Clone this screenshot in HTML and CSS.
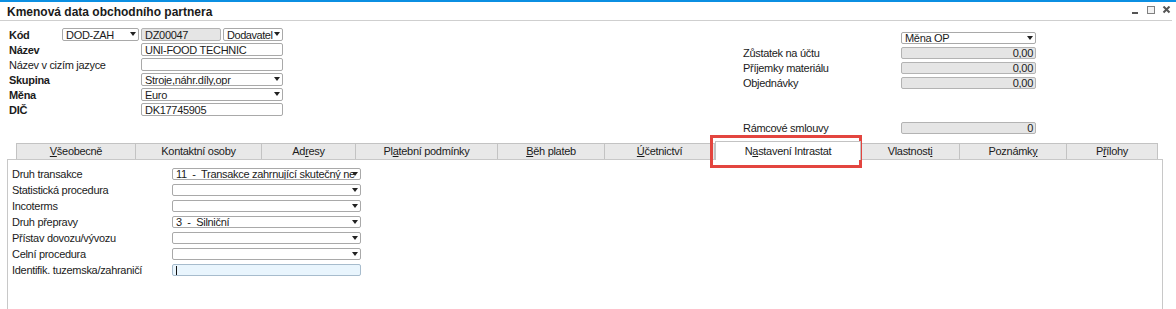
FILE: index.html
```html
<!DOCTYPE html>
<html lang="cs">
<head>
    <meta charset="UTF-8">
    <title>Kmenová data obchodního partnera</title>
    <link rel="stylesheet" href="styles.css">
</head>
<body>

<div class="topbar"></div>

<div class="titlebar">
    <h1>Kmenová data obchodního partnera</h1>
    <svg class="win-btns" width="41" height="8" viewBox="0 0 41 8">
        <rect x="2" y="6" width="6" height="2" fill="#555"/>
        <rect x="17.5" y="0.5" width="7" height="7" fill="#f2f2f2" stroke="#808080"/>
        <path d="M33.5 0.5 L39.5 6.5 M39.5 0.5 L33.5 6.5" stroke="#555" stroke-width="2"/>
    </svg>
</div>

<div class="head">
    <div class="head-left">
        <div class="row">
            <span class="lbl kod bold">Kód</span>
            <div class="field combo w77">DOD-ZAH</div>
            <div class="field ro w80">DZ00047</div>
            <div class="field combo w60">Dodavatel</div>
        </div>
        <div class="row">
            <span class="lbl bold">Název</span>
            <div class="field w142">UNI-FOOD TECHNIC</div>
        </div>
        <div class="row">
            <span class="lbl">Název v cizím jazyce</span>
            <div class="field w142"></div>
        </div>
        <div class="row">
            <span class="lbl bold">Skupina</span>
            <div class="field combo w142">Stroje,náhr.díly,opr</div>
        </div>
        <div class="row">
            <span class="lbl bold">Měna</span>
            <div class="field combo w142">Euro</div>
        </div>
        <div class="row">
            <span class="lbl bold">DIČ</span>
            <div class="field w142">DK17745905</div>
        </div>
    </div>

    <div class="head-right">
        <div class="row">
            <span class="lbl"></span>
            <div class="field combo w135">Měna OP</div>
        </div>
        <div class="row">
            <span class="lbl">Zůstatek na účtu</span>
            <div class="field ro num w135">0,00</div>
        </div>
        <div class="row">
            <span class="lbl">Příjemky materiálu</span>
            <div class="field ro num w135">0,00</div>
        </div>
        <div class="row">
            <span class="lbl">Objednávky</span>
            <div class="field ro num w135">0,00</div>
        </div>
        <div class="row"></div>
        <div class="row"></div>
        <div class="row">
            <span class="lbl">Rámcové smlouvy</span>
            <div class="field ro num w135">0</div>
        </div>
    </div>
</div>

<div class="tabs">
    <div class="tab first" style="width: 120px"><u>V</u>šeobecně</div>
    <div class="tab" style="width: 126px">Kontaktní osoby</div>
    <div class="tab" style="width: 94px">Ad<u>r</u>esy</div>
    <div class="tab" style="width: 142px">Pl<u>a</u>tební podmínky</div>
    <div class="tab" style="width: 107px"><u>B</u>ěh plateb</div>
    <div class="tab" style="width: 110px"><u>Ú</u>četnictví</div>
    <div class="tab active" style="width: 146px">N<u>a</u>stavení Intrastat</div>
    <div class="tab" style="width: 99px">Vlastnost<u>i</u></div>
    <div class="tab" style="width: 107px">Poznámk<u>y</u></div>
    <div class="tab" style="width: 91px">P<u>ř</u>ílohy</div>
</div>

<div class="panel">
    <div class="row">
        <span class="lbl">Druh transakce</span>
        <div class="field combo w189">11  -  Transakce zahrnující skutečný ne</div>
    </div>
    <div class="row">
        <span class="lbl">Statistická procedura</span>
        <div class="field combo w189"></div>
    </div>
    <div class="row">
        <span class="lbl">Incoterms</span>
        <div class="field combo w189"></div>
    </div>
    <div class="row">
        <span class="lbl">Druh přepravy</span>
        <div class="field combo w189">3  -  Silniční</div>
    </div>
    <div class="row">
        <span class="lbl">Přístav dovozu/vývozu</span>
        <div class="field combo w189"></div>
    </div>
    <div class="row">
        <span class="lbl">Celní procedura</span>
        <div class="field combo w189"></div>
    </div>
    <div class="row">
        <span class="lbl">Identifik. tuzemska/zahraničí</span>
        <div class="field focus w189"></div>
    </div>
</div>

<div class="highlight"></div>

</body>
</html>
```

FILE: styles.css
```css
* {
    margin: 0;
    padding: 0;
    box-sizing: border-box;
}

body {
    font-family: 'Liberation Sans', Arial, sans-serif;
    font-size: 11px;
    letter-spacing: -0.3px;
    color: #1b1b1b;
    background-color: #fff;
    width: 1176px;
    height: 309px;
    overflow: hidden;
    position: relative;
}

.topbar {
    height: 2px;
    background-color: #0b8fe2;
}

.titlebar {
    display: flex;
    justify-content: space-between;
    align-items: flex-start;
    height: 19px;
    margin-right: 4px;
    padding: 0 1px 0 7px;
    border-bottom: 1px solid #cfcfcf;
}

.titlebar h1 {
    font-size: 12px;
    font-weight: bold;
    letter-spacing: 0;
    line-height: 14px;
    padding-top: 3px;
    color: #1a1a1a;
}

.win-btns {
    margin-top: 4px;
}

/* header fields */

.head {
    display: flex;
    height: 120px;
}

.head-left {
    width: 743px;
    padding: 6px 0 0 9px;
}

.head-right {
    padding-top: 9px;
}

.row {
    display: flex;
    align-items: center;
    height: 15px;
}

.head-left .lbl {
    width: 132px;
}

.head-left .lbl.kod {
    width: 53px;
}

.head-right .lbl {
    width: 158px;
}

.bold {
    font-weight: bold;
}

.field {
    position: relative;
    height: 13px;
    border: 1px solid #a9a9a9;
    border-radius: 2px;
    background-color: #fff;
    padding: 0 3px;
    line-height: 12px;
    white-space: pre;
    overflow: hidden;
}

.head-right .field {
    height: 12px;
    line-height: 11px;
}

.combo {
    padding-right: 10px;
}

.combo::after {
    content: "";
    position: absolute;
    right: 2px;
    top: 3px;
    border-top: 4px solid #222;
    border-left: 3.5px solid transparent;
    border-right: 3.5px solid transparent;
}

.w60 {
    width: 60px;
    padding-right: 8px;
    letter-spacing: -0.45px;
}

.ro {
    background-color: #e5e5e5;
    border-color: #b3b3b3;
}

.num {
    text-align: right;
    padding-right: 2px;
}

.w77 { width: 77px; margin-right: 2px; }
.w80 { width: 80px; margin-right: 2px; }
.w135 { width: 135px; }
.w142 { width: 142px; }
.w189 { width: 189px; }

/* tabs */

.tabs {
    display: flex;
    align-items: flex-end;
    height: 18px;
    margin-left: 16px;
}

.tab {
    height: 16px;
    border: 1px solid #c3c3c3;
    border-left: none;
    border-bottom: none;
    background-color: #e8e8e8;
    text-align: center;
    line-height: 14px;
    white-space: nowrap;
}

.tab.first {
    border-left: 1px solid #c3c3c3;
}

.tab.active {
    position: relative;
    z-index: 1;
    height: 19px;
    margin-bottom: -1px;
    padding-top: 2px;
    border-left: 1px solid #c3c3c3;
    background-color: #fff;
}

.tab u {
    text-decoration: underline;
    text-underline-offset: 1px;
}

/* tab content */

.panel {
    width: 1156px;
    height: 150px;
    margin-left: 7px;
    padding: 6px 0 0 4px;
    border: 1px solid #c8c8c8;
    border-bottom: none;
}

.panel .row {
    height: 16px;
}

.panel .lbl {
    width: 160px;
}

.panel .field {
    height: 12px;
    line-height: 11px;
}

.focus {
    background-color: #e9f5fd;
    border-color: #a7bccd;
}

.focus::before {
    content: "";
    position: absolute;
    left: 3px;
    top: 1px;
    width: 1px;
    height: 9px;
    background-color: #111;
}

.highlight {
    position: absolute;
    left: 710px;
    top: 135px;
    width: 152px;
    height: 33px;
    border: 3px solid #e3453f;
}
```
